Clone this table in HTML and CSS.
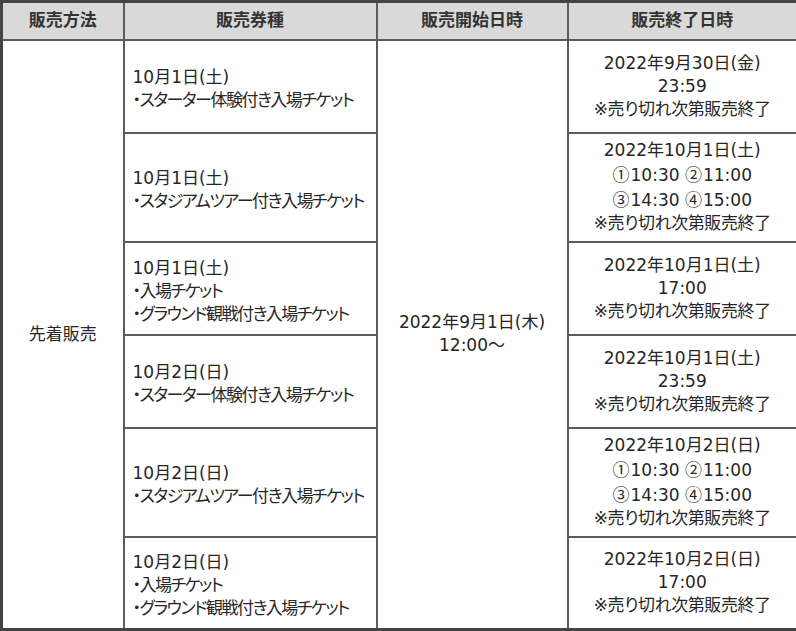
FILE: index.html
```html
<!DOCTYPE html>
<html lang="ja">
<head>
<meta charset="utf-8">
<link rel="stylesheet" href="styles.css">
</head>
<body>
<table class="sales">
  <colgroup>
    <col class="c1"><col class="c2"><col class="c3"><col class="c4">
  </colgroup>
  <thead>
    <tr class="head">
      <th>販売方法</th><th>販売券種</th><th>販売開始日時</th><th>販売終了日時</th>
    </tr>
  </thead>
  <tbody>
    <tr class="r93">
      <td class="method" rowspan="6">先着販売</td>
      <td class="kind">10月1日(土)<br><span class="item">・スターター体験付き入場チケット</span></td>
      <td class="start" rowspan="6">2022年9月1日(木)<br>12:00～</td>
      <td class="end">2022年9月30日(金)<br>23:59<br><span class="note">※売り切れ次第販売終了</span></td>
    </tr>
    <tr class="r109">
      <td class="kind">10月1日(土)<br><span class="item">・スタジアムツアー付き入場チケット</span></td>
      <td class="end">2022年10月1日(土)<br><span class="circ">①</span>10:30 <span class="circ">②</span>11:00<br><span class="circ">③</span>14:30 <span class="circ">④</span>15:00<br><span class="note">※売り切れ次第販売終了</span></td>
    </tr>
    <tr class="r93">
      <td class="kind">10月1日(土)<br><span class="item">・入場チケット</span><br><span class="item">・グラウンド観戦付き入場チケット</span></td>
      <td class="end">2022年10月1日(土)<br>17:00<br><span class="note">※売り切れ次第販売終了</span></td>
    </tr>
    <tr class="r93">
      <td class="kind">10月2日(日)<br><span class="item">・スターター体験付き入場チケット</span></td>
      <td class="end">2022年10月1日(土)<br>23:59<br><span class="note">※売り切れ次第販売終了</span></td>
    </tr>
    <tr class="r109">
      <td class="kind">10月2日(日)<br><span class="item">・スタジアムツアー付き入場チケット</span></td>
      <td class="end">2022年10月2日(日)<br><span class="circ">①</span>10:30 <span class="circ">②</span>11:00<br><span class="circ">③</span>14:30 <span class="circ">④</span>15:00<br><span class="note">※売り切れ次第販売終了</span></td>
    </tr>
    <tr class="r93">
      <td class="kind">10月2日(日)<br><span class="item">・入場チケット</span><br><span class="item">・グラウンド観戦付き入場チケット</span></td>
      <td class="end">2022年10月2日(日)<br>17:00<br><span class="note">※売り切れ次第販売終了</span></td>
    </tr>
  </tbody>
</table>
</body>
</html>
```
FILE: styles.css
```css
html, body {
  margin: 0;
  padding: 0;
  background: #ffffff;
}
.sales {
  width: 796px;
  border-collapse: collapse;
  table-layout: fixed;
  font-family: "DejaVu Sans", "Noto Sans CJK JP", sans-serif;
  font-feature-settings: "palt";
  font-size: 17px;
  line-height: 23px;
  color: #262626;
  border: 3px solid #444444;
}
.c1 { width: 122px; }
.c2 { width: 253px; }
.c3 { width: 191px; }
.c4 { width: 230px; }
.sales th, .sales td {
  border: 2px solid #5c5c5c;
  padding: 0 4px;
  vertical-align: middle;
  white-space: nowrap;
}
.sales th {
  background: #d9d9d9;
  font-weight: bold;
  color: #333333;
  text-align: center;
}
.head { height: 38px; }
.r93 { height: 93px; }
.r109 { height: 109px; }
.method, .start, .end { text-align: center; }
.sales td.kind {
  text-align: left;
  padding: 6px 4px 0 8px;
}
.item { letter-spacing: -1.5px; }
.note { letter-spacing: -0.4px; }
.circ {
  font-family: "Noto Sans CJK JP", sans-serif;
  font-feature-settings: normal;
  margin-right: 1px;
}
```
